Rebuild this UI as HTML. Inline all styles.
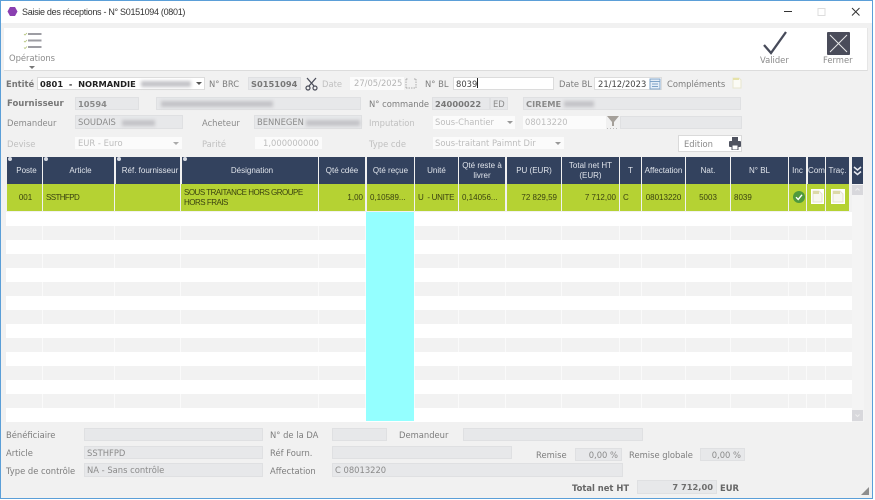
<!DOCTYPE html>
<html><head><meta charset="utf-8">
<style>
html,body{margin:0;padding:0;width:875px;height:500px;overflow:hidden;background:#fff}
*{box-sizing:border-box}
#w{position:relative;width:875px;height:500px;background:#f1f1f1;overflow:hidden;font-family:"DejaVu Sans","Liberation Sans",sans-serif;font-size:8.4px;color:#8a8a8a}
.a{position:absolute;white-space:nowrap}
.l{position:absolute;white-space:nowrap;font-size:8.4px;line-height:12px;color:#7d7d7d}
.ld{color:#c0c0c0}
.f{position:absolute;background:#e7e8ea;border:1px solid #dfe0e2;font-size:8.4px;line-height:13px;padding:0 2px;color:#8a8a8a;white-space:pre;overflow:hidden}
.d{position:absolute;background:#fbfbfb;font-size:8.4px;line-height:13px;padding:0 3px;color:#bdbdbd;white-space:pre;overflow:hidden}
.w{position:absolute;background:#fff;border:1px solid #dcdcdc;font-size:8.4px;line-height:13px;padding:0 3px;color:#444;white-space:pre;overflow:hidden}
.bd{font-weight:bold;font-size:8.3px}
.b{position:absolute;background:#c4c4c8;filter:blur(1.6px);height:6px}
.tri{position:absolute;width:0;height:0;border-left:3px solid transparent;border-right:3px solid transparent;border-top:3px solid #999}
.h{position:absolute;top:157px;height:27px;background:#33425e;color:#dfe3ea;font-family:"Liberation Sans",sans-serif;font-size:8px;line-height:10px;display:flex;align-items:center;justify-content:center;text-align:center;white-space:pre}
.hs{padding-left:4px}
.h i{position:absolute;left:1px;top:0;width:4px;height:4px;border-radius:50%;background:#d8dce4}
.c{position:absolute;top:184px;height:27px;background:#b5d233;color:#3a4210;font-family:"Liberation Sans",sans-serif;font-size:8px;line-height:10px;display:flex;align-items:center;white-space:pre;padding:0 2px}
.sep{position:absolute;top:212px;height:210px;width:1px;background:repeating-linear-gradient(#ffffff 0 14px,#fafafa 14px 28px)}
</style></head><body>
<div id="w">
<!-- title bar -->
<div class="a" style="left:0;top:0;width:875px;height:23px;background:#fff"></div>
<svg class="a" style="left:7px;top:6px" width="11" height="11" viewBox="0 0 11 11"><polygon points="3,1 8,1 10.5,5.5 8,10 3,10 .5,5.5" fill="#8a3fb0"/></svg>
<div class="a" style="left:22px;top:6px;font-family:'Liberation Sans',sans-serif;font-size:9px;letter-spacing:-.3px;line-height:12px;color:#333">Saisie des réceptions - N° S0151094 (0801)</div>
<svg class="a" style="left:780px;top:4px" width="90" height="16" viewBox="0 0 90 16"><path d="M4 7.500H12" stroke="#333" stroke-width="1"/><rect x="38" y="4.500" width="7" height="7" fill="none" stroke="#ddd"/><path d="M72 4L79.500 11.500M79.500 4L72 11.500" stroke="#333" stroke-width="1"/></svg>

<!-- toolbar -->
<div class="a" style="left:4px;top:28px;width:864px;height:43px;background:#fff;border-bottom:1px solid #dcdcdc;border-right:1px solid #e6e6e6"></div>
<svg class="a" style="left:22px;top:31px" width="22" height="19" viewBox="0 0 22 19"><path d="M2 3L3 4L5 2M2 10L3 11L5 9M2 16.500L3 17.500L5 15.500" stroke="#b3c47a" fill="none" stroke-width=".8"/><path d="M6 3H19.500M6 9.500H19.500M6 16H19.500" stroke="#9d9da3" stroke-width="2"/></svg>
<div class="a" style="left:9px;top:52px;font-size:8.400px;line-height:12px;color:#8b8b8b">Opérations</div>
<div class="tri" style="left:29px;top:66px;border-top-color:#777"></div>
<svg class="a" style="left:762px;top:31px" width="26" height="24" viewBox="0 0 26 24"><path d="M2 14L9 22L24 1" fill="none" stroke="#474b5a" stroke-width="2.300"/></svg>
<div class="a" style="left:760px;top:54px;font-size:8.400px;line-height:12px;color:#8b8b8b">Valider</div>
<svg class="a" style="left:827px;top:32px" width="23" height="23" viewBox="0 0 23 23"><rect width="23" height="23" rx="1" fill="#4a4c5a"/><path d="M3 3L20 20M20 3L3 20" stroke="#e8e8e8" stroke-width="1"/></svg>
<div class="a" style="left:823px;top:54px;font-size:8.400px;line-height:12px;color:#8b8b8b">Fermer</div>

<!-- row 1 -->
<div class="l" style="left:6px;top:78px;font-weight:bold;color:#777">Entité</div>
<div class="w bd" style="left:37px;top:77px;width:168px;height:13px;padding:0 2px;color:#222;line-height:12px">0801  -  NORMANDIE</div>
<div class="b" style="left:141px;top:81px;width:50px"></div>
<div class="tri" style="left:196px;top:82px;border-top-color:#555"></div>
<div class="l" style="left:209px;top:78px">N° BRC</div>
<div class="f bd" style="left:248px;top:77px;width:53px;height:13px;line-height:12px;color:#777">S0151094</div>
<svg class="a" style="left:305px;top:77px" width="13" height="14" viewBox="0 0 13 14"><path d="M2 1L9 9M11 1L4 9" stroke="#4b4e5a" stroke-width="1.300" fill="none"/><circle cx="3" cy="11" r="2" fill="none" stroke="#4b4e5a" stroke-width="1.200"/><circle cx="10" cy="11" r="2" fill="none" stroke="#4b4e5a" stroke-width="1.200"/></svg>
<div class="l ld" style="left:322px;top:78px">Date</div>
<div class="d" style="left:350px;top:77px;width:54px;height:13px;padding:0 4px;line-height:12px;color:#b5b5b5">27/05/2025</div>
<svg class="a" style="left:405px;top:77px" width="12" height="12" viewBox="0 0 12 12"><path d="M1 2H3M9 2H11M1 2V11M11 2V11M1 11H11" stroke="#aaa" stroke-dasharray="1.500 1" fill="none"/></svg>
<div class="l" style="left:425px;top:78px">N° BL</div>
<div class="w" style="left:453px;top:77px;width:101px;height:13px;padding:0 2px;line-height:12px">8039<span style="display:inline-block;width:1px;height:10px;background:#222;vertical-align:-1px"></span></div>
<div class="l" style="left:559px;top:78px">Date BL</div>
<div class="w" style="left:594px;top:77px;width:68px;height:13px;line-height:12px">21/12/2023</div>
<svg class="a" style="left:649px;top:78px" width="12" height="12" viewBox="0 0 12 12"><rect x="1" y="1" width="10" height="10" fill="#e4eef8" stroke="#7ea3c8"/><path d="M1 3.500H11M3 6H9M3 8.500H9" stroke="#7ea3c8"/></svg>
<div class="l" style="left:667px;top:78px">Compléments</div>
<svg class="a" style="left:732px;top:77px" width="10" height="12" viewBox="0 0 10 12"><path d="M1 1H7L9 3V11H1Z" fill="#fbfbf5" stroke="#e8e6cf"/><path d="M1 1H7V3H1Z" fill="#e6e2a8"/></svg>

<!-- row 2 -->
<div class="l" style="left:7px;top:98px;font-weight:bold;color:#777;font-size:8.500px">Fournisseur</div>
<div class="f bd" style="left:75px;top:97px;width:64px;height:13px;color:#8a8a8a">10594</div>
<div class="f" style="left:156px;top:97px;width:205px;height:13px"></div>
<div class="b" style="left:161px;top:101px;width:112px"></div>
<div class="l" style="left:369px;top:98px">N° commande</div>
<div class="f bd" style="left:432px;top:97px;width:58px;height:13px;color:#777">24000022</div>
<div class="f" style="left:490px;top:97px;width:18px;height:13px">ED</div>
<div class="f bd" style="left:523px;top:97px;width:218px;height:13px;color:#8a8a8a">CIREME</div>
<div class="b" style="left:564px;top:101px;width:30px"></div>

<!-- row 3 -->
<div class="l" style="left:7px;top:117px;color:#8a8a8a">Demandeur</div>
<div class="f" style="left:75px;top:115px;width:108px;height:14px">SOUDAIS</div>
<div class="b" style="left:122px;top:120px;width:33px"></div>
<div class="l" style="left:202px;top:117px;color:#8a8a8a">Acheteur</div>
<div class="f" style="left:254px;top:115px;width:108px;height:14px">BENNEGEN</div>
<div class="b" style="left:306px;top:120px;width:54px"></div>
<div class="l ld" style="left:369px;top:117px">Imputation</div>
<div class="d" style="left:433px;top:116px;width:82px;height:13px;padding:0 2px">Sous-Chantier</div>
<div class="tri" style="left:507px;top:121px"></div>
<div class="d" style="left:523px;top:116px;width:83px;height:13px;padding:0 2px">08013220</div>
<svg class="a" style="left:607px;top:116px" width="12" height="13" viewBox="0 0 12 13"><polygon points="0,0 12,0 7,6 7,10 5,10 5,6" fill="#a5a09a"/><path d="M0 12.500H12" stroke="#bbb" stroke-dasharray="1 2"/></svg>
<div class="f" style="left:620px;top:116px;width:122px;height:13px"></div>

<!-- row 4 -->
<div class="l ld" style="left:7px;top:138px">Devise</div>
<div class="d" style="left:75px;top:137px;width:107px;height:12px;line-height:13px">EUR - Euro</div>
<div class="tri" style="left:173px;top:142px;border-top-color:#aaa"></div>
<div class="l ld" style="left:202px;top:138px">Parité</div>
<div class="d" style="left:255px;top:137px;width:67px;height:12px;text-align:right">1,000000000</div>
<div class="l ld" style="left:369px;top:138px">Type cde</div>
<div class="d" style="left:433px;top:137px;width:131px;height:12px;padding:0 2px">Sous-traitant Paimnt Dir</div>
<div class="tri" style="left:555px;top:142px"></div>
<div class="a" style="left:678px;top:135px;width:64px;height:17px;background:#fff;border:1px solid #dadada;font-size:8.400px;line-height:16px;padding-left:5px;color:#8a8a8a">Edition</div>
<svg class="a" style="left:729px;top:137px" width="12" height="13" viewBox="0 0 12 13"><rect x="3" y="0" width="6" height="4" fill="#4f5360"/><rect x="0" y="4" width="12" height="6" rx="1" fill="#4f5360"/><rect x="3" y="8" width="6" height="5" fill="#fff" stroke="#4f5360"/></svg>

<!-- grid -->
<div class="a" style="left:6px;top:212px;width:846px;height:210px;background:repeating-linear-gradient(#fff 0 14px,#f2f2f2 14px 28px)"></div>
<div class="sep" style="left:42px"></div><div class="sep" style="left:114px"></div><div class="sep" style="left:180px"></div><div class="sep" style="left:318px"></div><div class="sep" style="left:365px"></div><div class="sep" style="left:414px"></div><div class="sep" style="left:458px"></div><div class="sep" style="left:505px"></div><div class="sep" style="left:561px"></div><div class="sep" style="left:619px"></div><div class="sep" style="left:641px"></div><div class="sep" style="left:685px"></div><div class="sep" style="left:730px"></div><div class="sep" style="left:788px"></div><div class="sep" style="left:806px"></div><div class="sep" style="left:825px"></div>
<div class="a" style="left:366px;top:212px;width:48px;height:209px;background:#94ffff"></div>

<div class="h hs" style="left:7px;width:35px"><i></i>Poste</div>
<div class="h hs" style="left:43px;width:71px"><i></i>Article</div>
<div class="h hs" style="left:116px;width:64px"><i></i>Réf. fournisseur</div>
<div class="h hs" style="left:182px;width:136px"><i></i>Désignation</div>
<div class="h" style="left:319px;width:46px">Qté cdée</div>
<div class="h" style="left:367px;width:47px">Qté reçue</div>
<div class="h" style="left:415px;width:43px">Unité</div>
<div class="h" style="left:459px;width:46px">Qté reste à
livrer</div>
<div class="h" style="left:507px;width:54px">PU (EUR)</div>
<div class="h" style="left:562px;width:57px">Total net HT
(EUR)</div>
<div class="h" style="left:620px;width:21px">T</div>
<div class="h" style="left:642px;width:43px">Affectation</div>
<div class="h" style="left:686px;width:44px">Nat.</div>
<div class="h" style="left:731px;width:57px">N° BL</div>
<div class="h" style="left:789px;width:17px">Inc</div>
<div class="h" style="left:808px;width:17px">Com</div>
<div class="h" style="left:826px;width:23px">Traç.</div>
<div class="h" style="left:852px;width:11px"><svg width="9" height="10" viewBox="0 0 9 10"><path d="M1 1L4.500 4L8 1M1 5.500L4.500 8.500L8 5.500" fill="none" stroke="#e8eaf0" stroke-width="1.500"/></svg></div>

<div class="c" style="left:7px;width:35px;justify-content:center;padding-left:4px">001</div>
<div class="c" style="left:43px;width:71px;padding-left:3px;letter-spacing:-.6px">SSTHFPD</div>
<div class="c" style="left:115px;width:65px"></div>
<div class="c" style="left:181px;width:137px;padding-left:3px;letter-spacing:-.5px">SOUS TRAITANCE HORS GROUPE
HORS FRAIS</div>
<div class="c" style="left:319px;width:46px;justify-content:flex-end">1,00</div>
<div class="c" style="left:367px;width:47px;padding-left:3px">0,10589...</div>
<div class="c" style="left:415px;width:43px;padding-left:3px;letter-spacing:-.3px">U  - UNITE</div>
<div class="c" style="left:459px;width:46px;padding-left:3px">0,14056...</div>
<div class="c" style="left:507px;width:54px;justify-content:flex-end;padding-right:4px">72 829,59</div>
<div class="c" style="left:562px;width:57px;justify-content:flex-end;padding-right:3px">7 712,00</div>
<div class="c" style="left:620px;width:21px;padding-left:3px">C</div>
<div class="c" style="left:642px;width:43px;justify-content:center">08013220</div>
<div class="c" style="left:686px;width:44px;justify-content:center">5003</div>
<div class="c" style="left:731px;width:57px;padding-left:3px">8039</div>
<div class="c" style="left:789px;width:17px"></div>
<div class="c" style="left:807px;width:18px"></div>
<div class="c" style="left:826px;width:23px"></div>
<svg class="a" style="left:793px;top:191px" width="12" height="12" viewBox="0 0 12 12"><circle cx="6" cy="6" r="6" fill="#4f9a3c"/><path d="M3 6.200L5.200 8.500L9 3.800" fill="none" stroke="#fff" stroke-width="1.400"/></svg>
<svg class="a" style="left:811px;top:189px" width="13" height="15" viewBox="0 0 13 15"><rect width="13" height="15" fill="#fff"/><path d="M2 2H8L11 5V13H2Z" fill="#f7f7ef" stroke="#e4e2cf"/><path d="M2 2H8V5H2Z" fill="#dcd9a8"/></svg>
<svg class="a" style="left:831px;top:189px" width="14" height="15" viewBox="0 0 14 15"><rect width="14" height="15" fill="#fff"/><path d="M2 2H9L12 5V13H2Z" fill="#f7f7ef" stroke="#e4e2cf"/><path d="M2 2H9V5H2Z" fill="#dcd9a8"/></svg>

<!-- scrollbar -->
<div class="a" style="left:852px;top:184px;width:12px;height:238px;background:#f4f4f4"></div>
<div class="a" style="left:852px;top:185px;width:11px;height:10px;background:#d8d8dc"></div>
<div class="a" style="left:852px;top:410px;width:11px;height:11px;background:#d8d8dc"></div>
<svg class="a" style="left:852px;top:185px" width="11" height="10" viewBox="0 0 11 10"><path d="M3.500 5.500L5.500 3.500L7.500 5.500" stroke="#eee" fill="none"/></svg>
<svg class="a" style="left:852px;top:410px" width="11" height="11" viewBox="0 0 11 11"><path d="M3.500 4.500L5.500 6.500L7.500 4.500" stroke="#eee" fill="none"/></svg>

<!-- bottom -->
<div class="l" style="left:6px;top:429px">Bénéficiaire</div>
<div class="f" style="left:84px;top:428px;width:179px;height:13px"></div>
<div class="l" style="left:270px;top:429px">N° de la DA</div>
<div class="f" style="left:332px;top:428px;width:55px;height:13px"></div>
<div class="l" style="left:399px;top:429px">Demandeur</div>
<div class="f" style="left:463px;top:428px;width:180px;height:13px"></div>

<div class="l" style="left:6px;top:447px">Article</div>
<div class="f" style="left:84px;top:446px;width:179px;height:13px">SSTHFPD</div>
<div class="l" style="left:270px;top:447px">Réf Fourn.</div>
<div class="f" style="left:332px;top:446px;width:180px;height:13px"></div>
<div class="l" style="left:536px;top:449px">Remise</div>
<div class="f" style="left:575px;top:448px;width:47px;height:13px;padding:0 3px;text-align:right">0,00 %</div>
<div class="l" style="left:629px;top:449px">Remise globale</div>
<div class="f" style="left:700px;top:448px;width:45px;height:13px;padding:0 3px;text-align:right">0,00 %</div>

<div class="l" style="left:6px;top:465px">Type de contrôle</div>
<div class="f" style="left:84px;top:463px;width:179px;height:14px">NA - Sans contrôle</div>
<div class="l" style="left:270px;top:465px">Affectation</div>
<div class="f" style="left:332px;top:463px;width:291px;height:14px">C 08013220</div>

<div class="l" style="left:572px;top:482px;font-weight:bold;color:#666">Total net HT</div>
<div class="f bd" style="left:637px;top:480px;width:80px;height:14px;padding:0 3px;text-align:right;color:#6e6e6e">7 712,00</div>
<div class="l" style="left:720px;top:482px;font-weight:bold;color:#666">EUR</div>
<svg class="a" style="left:861px;top:487px" width="8" height="8" viewBox="0 0 8 8"><polygon points="8,0 8,8 0,8" fill="#8e8e8e"/></svg>

<!-- window border -->
<div class="a" style="left:873px;top:0;width:2px;height:500px;background:#fff"></div>
<div class="a" style="left:0;top:499px;width:875px;height:1px;background:#fff"></div>
<div class="a" style="left:0;top:0;width:873px;height:499px;border:1px solid #5b9fd8;pointer-events:none"></div>
</div>
</body></html>
